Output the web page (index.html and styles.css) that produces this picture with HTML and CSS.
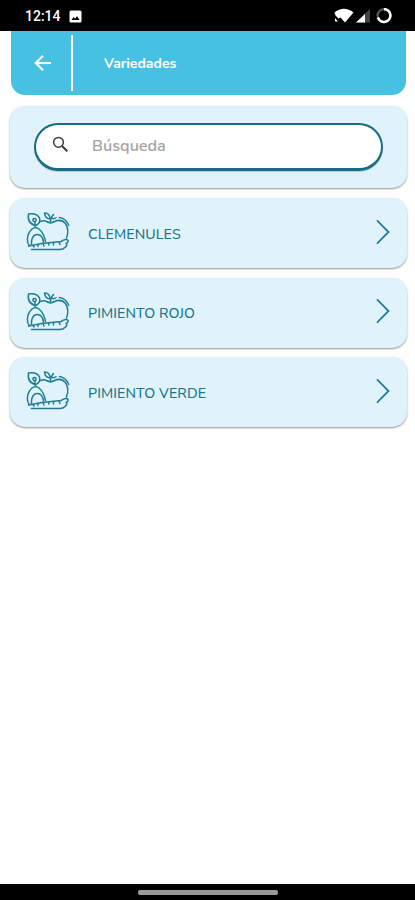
FILE: index.html
```html
<!DOCTYPE html>
<html lang="es">
<head>
<meta charset="utf-8">
<meta name="viewport" content="width=device-width, initial-scale=1">
<title>Variedades</title>
<link rel="stylesheet" href="styles.css">
</head>
<body>
<svg class="defs" width="0" height="0" aria-hidden="true">
  <symbol id="produce" viewBox="0 0 46 42">
    <g fill="none" stroke="#207d92" stroke-width="1.500" stroke-linecap="round" stroke-linejoin="round">
      <path d="M3.500 3Q12 1.500 14.500 7Q16 12 11 14.500Q2 13 3.500 3Z"/>
      <circle cx="9.500" cy="9" r="1.600"/>
      <path d="M10 11V15.500"/>
      <path d="M4.500 35C1.500 32 1.800 25 4.500 21C7 16.500 11.500 15.500 14 18C17.500 21 19.500 25 20.500 30.500"/>
      <path d="M6.500 34C6 26 9.500 23 13 23.500C16 24 18 27 18.500 31"/>
      <path d="M3.500 35L17 32.500L36 30.500Q41.500 27 43 29.500Q43.500 31.500 41 32.500Q43 34 40 36.500Q38 38.500 35 38.500H6.500"/>
      <path d="M8 34.500L9 36M13 33.500V35.500M18 32.500L19 35M23.500 32L24 34M28.500 31.500V34M34 31L35 33.500"/>
      <path d="M15.500 10.500Q19 8.800 21.500 10.500Q25.500 13 29.500 10.500Q36 7.500 40.500 12.500Q44.500 19 41.500 27"/>
      <path d="M34.500 6.500Q41 7.500 43.800 14.500"/>
      <path d="M25.500 12Q25 7.500 28.500 3.500M25 8Q20 7.500 19.500 2Q25 2 25 8M27 7.200Q29 8.500 31 6.800"/>
    </g>
  </symbol>
  <symbol id="chevron" viewBox="0 0 14 26">
    <path d="M1.500 1.800L12.500 13L1.500 24.200" fill="none" stroke="#207d98" stroke-width="1.800" stroke-linecap="round"/>
  </symbol>
</svg>
<div class="screen">
  <div class="status">
    <span class="clock">12:14</span>
    <svg class="photo" viewBox="0 0 13 13"><path fill="#fff" fill-rule="evenodd" d="M2 .5h9a1.500 1.500 0 0 1 1.500 1.500v9a1.500 1.500 0 0 1-1.500 1.500H2A1.500 1.500 0 0 1 .5 11V2A1.500 1.500 0 0 1 2 .5ZM2.500 10h8.200L8 6.200L6 8.700L4.600 7Z"/></svg>
    <svg class="signals" viewBox="0 0 60 18">
      <path fill="#fff" d="M.5 4.500Q10-3 19.500 4.500L11 14.500L6.500 9.500L4.500 10.500L1.500 7.500ZM1 10L4 13.500H1Z"/>
      <path fill="#444" d="M36 1V14.500H22Z"/>
      <path fill="#fff" d="M31 6V14.500H22Z"/>
      <circle cx="50" cy="7.500" r="6.400" fill="none" stroke="#555" stroke-width="2.300"/>
      <path d="M50 1.100A6.400 6.400 0 1 1 43.900 9.500" fill="none" stroke="#fff" stroke-width="2.600"/>
    </svg>
  </div>
  <header class="header">
    <svg class="back" viewBox="0 0 18 18"><path d="M17 9H2M9 1.700L1.700 9L9 16.300" fill="none" stroke="#fff" stroke-width="2"/></svg>
    <span class="divider"></span>
    <h1 class="title">Variedades</h1>
  </header>
  <main class="content">
    <section class="card search-card">
      <label class="search">
        <svg class="lens" viewBox="0 0 17 17"><g fill="none" stroke="#3b3b3b"><circle cx="6.500" cy="6.300" r="4.900" stroke-width="1.500"/><path d="M10 10L15.300 15.200" stroke-width="2"/></g></svg>
        <span class="placeholder">Búsqueda</span>
      </label>
    </section>
    <section class="card item"><svg class="produce"><use href="#produce"/></svg><span class="name">CLEMENULES</span><svg class="chevron"><use href="#chevron"/></svg></section>
    <section class="card item"><svg class="produce"><use href="#produce"/></svg><span class="name">PIMIENTO ROJO</span><svg class="chevron"><use href="#chevron"/></svg></section>
    <section class="card item"><svg class="produce"><use href="#produce"/></svg><span class="name">PIMIENTO VERDE</span><svg class="chevron"><use href="#chevron"/></svg></section>
  </main>
  <footer class="nav"><span class="handle"></span></footer>
</div>
</body>
</html>
```
FILE: styles.css
```css
* { box-sizing: border-box; }
body { margin: 0; background: #fefefe; font-family: "Nunito", "Noto Sans", sans-serif; }
svg { display: block; flex: none; }
.defs { position: absolute; }
.screen { height: 900px; display: flex; flex-direction: column; }
.status { height: 31px; flex: none; background: #000; color: #fff; display: flex; align-items: center; padding: 2px 21px 0 25px; }
.clock { font: 500 14px/18px Roboto, sans-serif; width: 44px; margin-top: -1px; }
.photo { width: 13px; height: 13px; margin-top: -1px; }
.signals { width: 60px; height: 18px; margin-left: auto; margin-top: 1px; }
.header { height: 64px; flex: none; margin: 0 9px 0 11px; background: #46c1e1; border-radius: 0 0 14px 14px; display: flex; align-items: center; padding-left: 23px; }
.back { width: 18px; height: 18px; }
.divider { width: 2px; height: 56px; background: #fff; margin-left: 19px; }
.title { margin: 1px 0 0 31px; color: #fff; font-size: 14px; font-weight: 700; line-height: 20px; }
.content { flex: 1; padding: 11px 8px 0 10px; display: flex; flex-direction: column; gap: 10px; }
.card { background: #e0f3fa; border-radius: 15px; box-shadow: 0 1px 2px rgba(0,0,0,.42); }
.search-card { height: 82px; padding: 17px 24px 0; }
.search { height: 48px; border: 2px solid #176b85; border-bottom-width: 3px; border-radius: 24px; background: #fff; display: flex; align-items: center; padding-left: 16px; box-shadow: 0 1px 1px rgba(0,0,0,.18); }
.lens { width: 17px; height: 17px; margin-top: -4px; }
.placeholder { margin-left: 23px; margin-top: -1px; color: #a3a3a3; font-size: 16.200px; font-weight: 600; line-height: 20px; }
.item { height: 70px; display: flex; align-items: center; padding: 0 17px 0 15px; }
.item + .item { margin-top: -.4px; }
.produce { width: 46px; height: 42px; margin-top: -2px; }
.name { margin: 3px 0 0 17px; color: #20758a; font-size: 14.200px; font-weight: 500; letter-spacing: .1px; line-height: 20px; }
.chevron { width: 14px; height: 26px; margin-left: auto; margin-top: -3px; }
.nav { height: 16px; flex: none; background: #000; display: flex; justify-content: center; padding-top: 6px; }
.handle { width: 140px; height: 5px; border-radius: 2px; background: #999; }
```
